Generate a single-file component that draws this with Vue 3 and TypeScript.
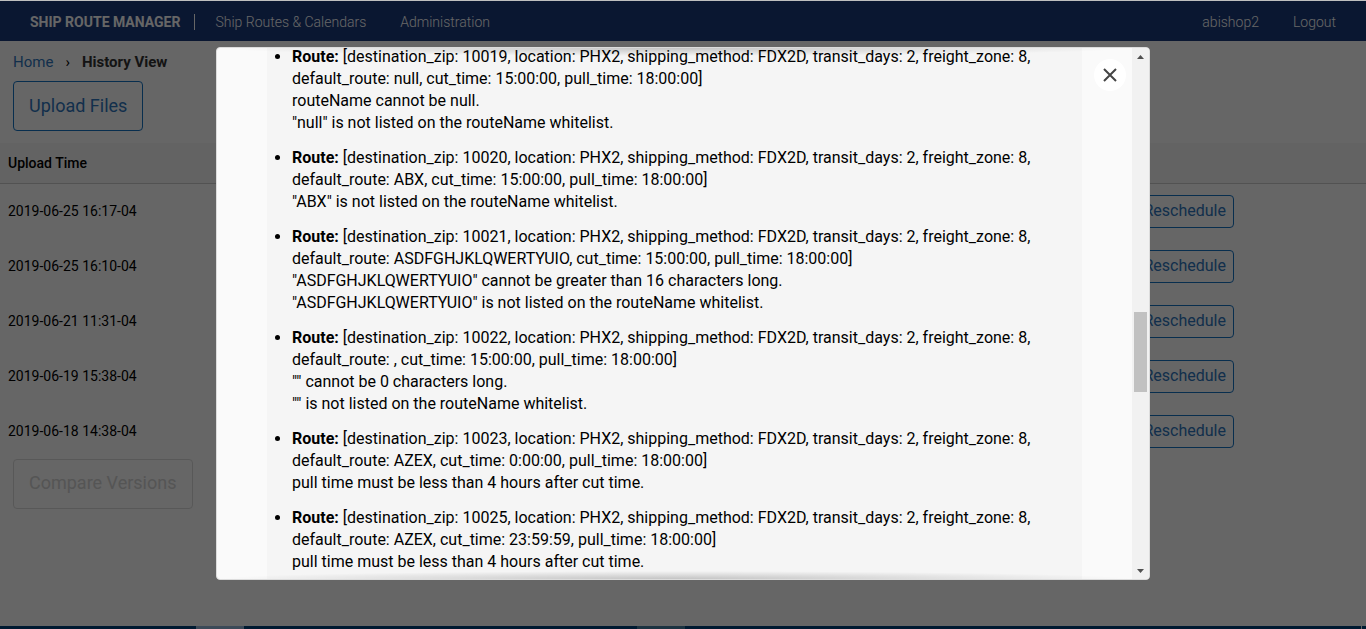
<script setup lang="ts">
interface RouteIssue {
  zip: number
  defaultRoute: string
  cutTime: string
  errors: string[]
}

const uploads: string[] = [
  '2019-06-25 16:17-04',
  '2019-06-25 16:10-04',
  '2019-06-21 11:31-04',
  '2019-06-19 15:38-04',
  '2019-06-18 14:38-04',
]

const issues: RouteIssue[] = [
  { zip: 10019, defaultRoute: 'null', cutTime: '15:00:00', errors: ['routeName cannot be null.', '"null" is not listed on the routeName whitelist.'] },
  { zip: 10020, defaultRoute: 'ABX', cutTime: '15:00:00', errors: ['"ABX" is not listed on the routeName whitelist.'] },
  {
    zip: 10021,
    defaultRoute: 'ASDFGHJKLQWERTYUIO',
    cutTime: '15:00:00',
    errors: ['"ASDFGHJKLQWERTYUIO" cannot be greater than 16 characters long.', '"ASDFGHJKLQWERTYUIO" is not listed on the routeName whitelist.'],
  },
  { zip: 10022, defaultRoute: '', cutTime: '15:00:00', errors: ['"" cannot be 0 characters long.', '"" is not listed on the routeName whitelist.'] },
  { zip: 10023, defaultRoute: 'AZEX', cutTime: '0:00:00', errors: ['pull time must be less than 4 hours after cut time.'] },
  { zip: 10025, defaultRoute: 'AZEX', cutTime: '23:59:59', errors: ['pull time must be less than 4 hours after cut time.'] },
]
</script>

<template>
  <div class="page">
    <header class="navbar">
      <a class="brand" href="#">SHIP ROUTE MANAGER</a>
      <nav class="links">
        <a href="#">Ship Routes &amp; Calendars</a>
        <a href="#">Administration</a>
      </nav>
      <div class="account">
        <a href="#">abishop2</a>
        <a href="#">Logout</a>
      </div>
    </header>

    <main>
      <div class="crumbs">
        <a href="#">Home</a>
        <span class="sep">›</span>
        <strong>History View</strong>
      </div>
      <button class="btn large upload" type="button">Upload Files</button>
      <table class="history">
        <thead>
          <tr>
            <th scope="col">Upload Time</th>
            <td></td>
          </tr>
        </thead>
        <tbody>
          <tr v-for="time in uploads" :key="time">
            <td>{{ time }}</td>
            <td class="actions"><button class="btn small" type="button">Reschedule</button></td>
          </tr>
        </tbody>
      </table>
      <button class="btn large compare" type="button" disabled>Compare Versions</button>
    </main>

    <div class="taskbar"><span></span><span></span><i></i></div>

    <div class="overlay">
      <section class="dialog" role="dialog" aria-label="Route errors">
        <div class="body">
          <ul>
            <li v-for="issue in issues" :key="issue.zip">
              <strong>Route:</strong> [destination_zip: {{ issue.zip }}, location: PHX2, shipping_method: FDX2D, transit_days: 2, freight_zone: 8, default_route: {{ issue.defaultRoute }}, cut_time: {{ issue.cutTime }}, pull_time: 18:00:00]
              <div v-for="error in issue.errors" :key="error">{{ error }}</div>
            </li>
          </ul>
        </div>
        <div class="scrollbar" aria-hidden="true">
          <svg width="17" height="17" viewBox="0 0 17 17"><path d="M5 11h7L8.500 7z" fill="#505050" /></svg>
          <div class="track"><div class="thumb"></div></div>
          <svg width="17" height="17" viewBox="0 0 17 17"><path d="M5 7h7L8.500 11z" fill="#505050" /></svg>
        </div>
        <button class="close" type="button" aria-label="Close">
          <svg width="14" height="14" viewBox="0 0 14 14"><path d="M1 1l12 12M13 1L1 13" stroke="#444" stroke-width="2" /></svg>
        </button>
      </section>
    </div>
  </div>
</template>

<style>
body {
  margin: 0;
  overflow: hidden;
}
</style>

<style scoped>
.page {
  position: relative;
  display: flex;
  flex-direction: column;
  box-sizing: border-box;
  height: 100vh;
  overflow: hidden;
  border-top: 1px solid #bfbfbf;
  background: #fff;
  color: #000;
  font: 16px/22px Roboto, sans-serif;
}

a {
  color: inherit;
  text-decoration: none;
}

button {
  font-family: inherit;
}

.navbar {
  display: flex;
  align-items: center;
  flex: none;
  height: 40px;
  padding: 2px 30px 0;
  box-sizing: border-box;
  background: #193a7c;
  color: #fff;
  font-size: 14px;
  line-height: 16px;
}

.brand {
  padding-right: 14px;
  border-right: 1px solid #fff;
  font-weight: 700;
}

.links,
.account {
  display: flex;
  gap: 34px;
  font-weight: 300;
}

.links {
  margin-left: 20px;
}

.account {
  margin-left: auto;
}

main {
  flex: 1;
  min-height: 0;
}

.crumbs {
  display: flex;
  gap: 12px;
  padding: 10px 13px 8px;
  font-size: 15px;
}

.crumbs a {
  color: #2f76bd;
}

.crumbs strong {
  color: #333;
  font-weight: 700;
}

.btn {
  display: block;
  box-sizing: border-box;
  border: 1px solid #1673c4;
  border-radius: 4px;
  background: transparent;
  color: #2f76bd;
}

.large {
  height: 50px;
  margin: 0 13px;
  padding: 0 15px 2px;
  font-size: 18px;
}

.small {
  height: 33px;
  padding: 0 7px 2px;
  margin-left: auto;
  font-size: 16px;
}

.btn:disabled {
  border-color: #dcdcdc;
  color: #d4d4d4;
}

.history {
  width: 100%;
  margin-top: 12px;
  border-collapse: collapse;
  font-size: 14px;
}

.history thead {
  background: #f7f7f7;
}

.history th,
.history thead td {
  box-sizing: border-box;
  height: 40px;
  padding: 0 8px;
  border-bottom: 1px solid #ccc;
  text-align: left;
  font-weight: 500;
}

.history tbody td {
  height: 55px;
  padding: 0 8px;
}

.history .actions {
  padding-right: 132px;
}

.taskbar {
  display: flex;
  flex: none;
  height: 3px;
  background: #00427a;
}

.taskbar span {
  width: 48px;
  margin-left: 196px;
  background: #96b8dc;
}

.taskbar span + span {
  margin-left: 393px;
  background: #4680a3;
}

.taskbar i {
  width: 1px;
  margin-left: auto;
  margin-right: 4px;
  background: #fff;
}

.overlay {
  position: absolute;
  inset: 0;
  display: flex;
  align-items: center;
  justify-content: center;
  padding-bottom: 3px;
  background: #0009;
}

.dialog {
  position: relative;
  display: flex;
  box-sizing: border-box;
  width: 934px;
  max-width: calc(100% - 32px);
  height: calc(100% - 92px);
  overflow: hidden;
  border: 1px solid #dcdcdc;
  border-radius: 4px;
  background: #fafafa;
}

.dialog::before,
.dialog::after {
  content: "";
  position: absolute;
  left: 0;
  right: 17px;
  height: 8px;
  pointer-events: none;
}

.dialog::before {
  top: 0;
  background: radial-gradient(farthest-side at 50% 0, #0003, #0000);
}

.dialog::after {
  bottom: 0;
  background: radial-gradient(farthest-side at 50% 100%, #0003, #0000);
}

.body {
  display: flex;
  flex-direction: column;
  flex: 1;
  min-width: 0;
  margin: 0 50px;
  overflow: hidden;
  background: #f5f5f5;
}

ul {
  margin: 0;
  margin-top: -2px;
  padding: 0 25px;
}

li {
  margin-bottom: 13px;
}

.scrollbar {
  display: flex;
  flex-direction: column;
  width: 17px;
  background: #f1f1f1;
}

.track {
  flex: 1;
  display: flex;
  flex-direction: column;
}

.track::before {
  content: "";
  flex: 247;
}

.track::after {
  content: "";
  flex: 170;
}

.thumb {
  height: 80px;
  margin: 0 2px;
  background: #c1c1c1;
}

.close {
  position: absolute;
  top: 11px;
  right: 23px;
  display: flex;
  align-items: center;
  justify-content: center;
  width: 32px;
  height: 32px;
  padding: 0;
  border: 0;
  border-radius: 50%;
  background: #fff;
}
</style>
